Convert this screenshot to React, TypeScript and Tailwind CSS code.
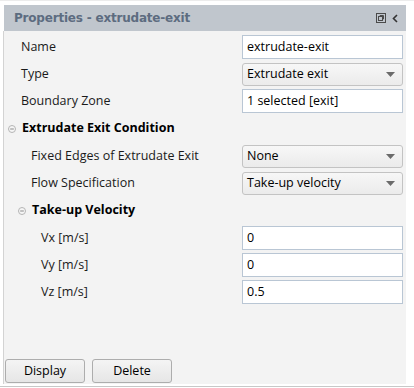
import React from 'react';

const Arrow = () => (
  <svg width="9" height="5" viewBox="0 0 9 5" className="shrink-0">
    <path d="M0 0h9L4.5 5z" fill="#6b6b6b" />
  </svg>
);

const Collapse = () => (
  <svg width="8" height="8" viewBox="0 0 8 8" className="shrink-0">
    <circle cx="4" cy="4" r="3.5" fill="#f6f6f6" stroke="#b4b4b4" />
    <path d="M2.2 4h3.6" stroke="#8a8a8a" />
  </svg>
);

const TextBox = ({ value }: { value: string }) => (
  <div className="w-[161px] h-[24px] flex items-center px-[4px] bg-white border border-[#b9c6d4] text-[12.5px] text-black">
    {value}
  </div>
);

const SelectBox = ({ value }: { value: string }) => (
  <div className="w-[161px] h-[23px] flex items-center justify-between pl-[4px] pr-[7px] rounded-[3px] border border-[#c3c3c3] bg-gradient-to-b from-[#f7f7f7] to-[#ebebeb] text-[12.5px] text-black">
    <span>{value}</span>
    <Arrow />
  </div>
);

const Row = ({ label, indent, children }: { label: string; indent: string; children: React.ReactNode }) => (
  <div className="flex items-center justify-between h-[24px] mt-[3px] pr-[3px]">
    <span className={`${indent} text-[12.5px] text-[#1a1a1a]`}>{label}</span>
    {children}
  </div>
);

const Section = ({ title, indent }: { title: string; indent: string }) => (
  <div className={`flex items-center gap-[6px] h-[25px] mt-[3px] ${indent}`}>
    <Collapse />
    <span className="text-[12.5px] font-bold text-black">{title}</span>
  </div>
);

const Button = ({ label }: { label: string }) => (
  <button className="w-[80px] h-[24px] rounded-[3px] border border-[#adadad] bg-gradient-to-b from-[#f4f4f4] to-[#e6e6e6] text-[12.5px] text-black">
    {label}
  </button>
);

export default function App() {
  return (
    <div className="w-[414px] h-[388px] bg-white flex flex-col" style={{ fontFamily: '"Open Sans", sans-serif' }}>
      <div className="h-[5px] border-t border-[#ececec]" />
      <div className="ml-[4px] w-[402px] h-[26px] bg-[#c0c6cd] flex items-center justify-between pl-[10px] pr-[8px]">
        <span className="text-[12px] font-bold text-[#5d6c80] tracking-[-0.2px]" style={{ fontFamily: '"DejaVu Sans", sans-serif' }}>
          Properties - extrudate-exit
        </span>
        <div className="flex items-center gap-[6px]">
          <svg width="10" height="10" viewBox="0 0 10 10">
            <rect x="0.5" y="0.5" width="9" height="9" fill="none" stroke="#4a4a4a" />
            <rect x="2.5" y="3.5" width="4" height="4" fill="none" stroke="#4a4a4a" />
            <path d="M4 3.5V2.5h3.5v3.5H6.5" fill="none" stroke="#4a4a4a" />
          </svg>
          <svg width="6" height="9" viewBox="0 0 6 9">
            <path d="M5 1L1.5 4.5 5 8" fill="none" stroke="#333" strokeWidth="1.6" />
          </svg>
        </div>
      </div>
      <div className="ml-[3px] w-[403px] h-[353px] border-l border-[#d3d3d3] bg-[#f3f3f3] flex flex-col pt-[1px]">
        <Row label="Name" indent="pl-[17px]"><TextBox value="extrudate-exit" /></Row>
        <Row label="Type" indent="pl-[17px]"><SelectBox value="Extrudate exit" /></Row>
        <Row label="Boundary Zone" indent="pl-[17px]"><TextBox value="1 selected [exit]" /></Row>
        <Section title="Extrudate Exit Condition" indent="pl-[4px]" />
        <Row label="Fixed Edges of Extrudate Exit" indent="pl-[27px]"><SelectBox value="None" /></Row>
        <Row label="Flow Specification" indent="pl-[27px]"><SelectBox value="Take-up velocity" /></Row>
        <Section title="Take-up Velocity" indent="pl-[14px]" />
        <Row label="Vx [m/s]" indent="pl-[37px]"><TextBox value="0" /></Row>
        <Row label="Vy [m/s]" indent="pl-[37px]"><TextBox value="0" /></Row>
        <Row label="Vz [m/s]" indent="pl-[37px]"><TextBox value="0.5" /></Row>
        <div className="mt-auto flex gap-[7px] pl-[1px] pb-[1px]">
          <Button label="Display" />
          <Button label="Delete" />
        </div>
      </div>
      <div className="h-[2px]" />
      <div className="h-[1px] bg-[#c8c8c8]" />
    </div>
  );
}
